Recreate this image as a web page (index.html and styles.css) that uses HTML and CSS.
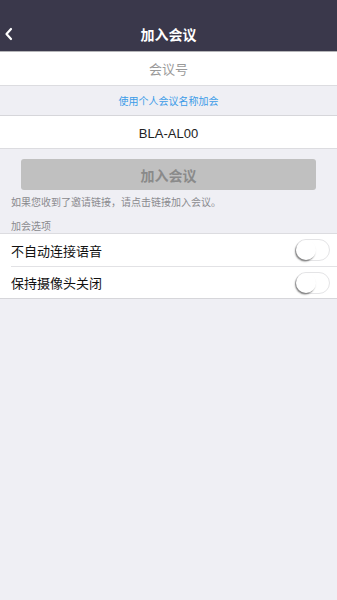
FILE: index.html
```html
<!DOCTYPE html>
<html lang="zh-CN">
<head>
<meta charset="utf-8">
<meta name="viewport" content="width=device-width, initial-scale=1">
<title>加入会议</title>
<link rel="stylesheet" href="styles.css">
</head>
<body>
<div class="app">
  <header class="topbar">
    <span class="back">
      <svg width="10" height="14" viewBox="0 0 10 14"><path d="M7 2 L2.5 7 L7 12" fill="none" stroke="#fff" stroke-width="2.2" stroke-linecap="round" stroke-linejoin="round"/></svg>
    </span>
    <h1 class="title">加入会议</h1>
  </header>
  <div class="field field-id">会议号</div>
  <div class="link-row">使用个人会议名称加会</div>
  <div class="field field-name">BLA-AL00</div>
  <div class="btn-wrap">
    <button class="join-btn">加入会议</button>
  </div>
  <p class="hint">如果您收到了邀请链接，请点击链接加入会议。</p>
  <p class="section-label">加会选项</p>
  <div class="options">
    <div class="option">
      <span class="option-text">不自动连接语音</span>
      <span class="toggle"><span class="knob"></span></span>
    </div>
    <div class="option">
      <span class="option-text">保持摄像头关闭</span>
      <span class="toggle"><span class="knob"></span></span>
    </div>
  </div>
</div>
</body>
</html>
```
FILE: styles.css
```css
* { box-sizing: border-box; }
html, body {
  margin: 0;
  padding: 0;
  background: #efeff4;
  font-family: "Noto Sans CJK SC", "Noto Sans", sans-serif;
}
.app {
  width: 337px;
  min-height: 600px;
  background: #efeff4;
}
.topbar {
  height: 52px;
  background: #3a384b;
  border-bottom: 1px solid #b5b5b8;
  display: flex;
  align-items: flex-end;
  justify-content: center;
  position: relative;
  padding-bottom: 7px;
}
.back {
  position: absolute;
  left: 4px;
  bottom: 10px;
  display: flex;
}
.title {
  margin: 0;
  color: #fff;
  font-size: 14px;
  font-weight: bold;
  line-height: 20px;
}
.field {
  background: #fff;
  display: flex;
  align-items: center;
  justify-content: center;
  font-size: 13px;
}
.field-id {
  height: 34px;
  color: #9a9a9a;
  border-bottom: 1px solid #dcdce0;
}
.link-row {
  height: 30px;
  display: flex;
  align-items: center;
  justify-content: center;
  color: #3a9be8;
  font-size: 10px;
  border-bottom: 1px solid #d6d6da;
}
.field-name {
  height: 33px;
  padding-top: 3px;
  color: #222;
  font-family: "Liberation Sans", Arial, sans-serif;
  font-size: 13px;
  border-bottom: 1px solid #dcdce0;
}
.btn-wrap {
  padding: 10px 21px 0 21px;
}
.join-btn {
  display: block;
  width: 100%;
  height: 31px;
  border: none;
  border-radius: 3px;
  background: #c0c0c0;
  color: #8a8a8a;
  font-family: "Noto Sans CJK SC", sans-serif;
  font-size: 14px;
  font-weight: bold;
  padding: 0;
}
.hint {
  margin: 4px 0 0 0;
  padding-left: 11px;
  color: #8a8a8e;
  font-size: 10px;
  line-height: 16px;
}
.section-label {
  margin: 9px 0 0 0;
  padding-left: 11px;
  color: #8a8a8e;
  font-size: 10px;
  line-height: 14px;
}
.options {
  margin-top: 0;
  background: #fff;
  border-top: 1px solid #dcdce0;
  border-bottom: 1px solid #d6d6da;
  padding-left: 11px;
}
.option {
  height: 32px;
  display: flex;
  align-items: center;
  justify-content: space-between;
  padding-right: 7px;
}
.option + .option {
  border-top: 1px solid #e2e2e5;
}
.option-text {
  font-size: 13px;
  color: #111;
}
.toggle {
  width: 35px;
  height: 22px;
  border-radius: 11px;
  border: 1px solid #e4e4e6;
  background: #fff;
  position: relative;
}
.knob {
  position: absolute;
  left: 0;
  top: 0;
  width: 20px;
  height: 20px;
  border-radius: 50%;
  background: #fff;
  box-shadow: -1px 1.5px 1.5px rgba(0,0,0,0.45);
}
```
